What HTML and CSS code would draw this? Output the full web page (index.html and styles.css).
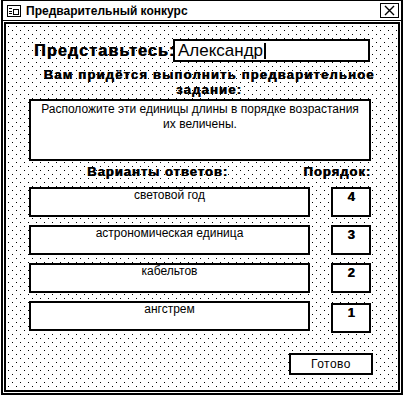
FILE: index.html
```html
<!DOCTYPE html>
<html lang="ru">
<head>
    <meta charset="UTF-8">
    <title>Предварительный конкурс</title>
    <link rel="stylesheet" href="styles.css">
</head>
<body>
    <div class="window">
        <div class="titlebar">
            <svg class="sys-icon" width="14" height="12" viewBox="0 0 14 12">
                <rect x="0.5" y="0.5" width="13" height="11" fill="none" stroke="#000"/>
                <path d="M2 3.5h3M2 6.5h3M2 8.5h3" stroke="#000"/>
                <rect x="6.5" y="4.5" width="5" height="5" fill="none" stroke="#000"/>
            </svg>
            <span class="title">Предварительный конкурс</span>
            <div class="close-box">
                <svg width="11" height="11" viewBox="0 0 11 11">
                    <path d="M1 1L10 10M10 1L1 10" stroke="#000" stroke-width="1.4"/>
                </svg>
            </div>
        </div>

        <div class="client">
            <div class="name-row">
                <span class="name-label">Представьтесь:</span>
                <div class="name-field">Александр<span class="caret"></span></div>
            </div>

            <div class="task-title">Вам придётся выполнить предварительное задание:</div>

            <div class="task-box">Расположите эти единицы длины в порядке возрастания их величены.</div>

            <div class="answers-head">
                <span>Варианты ответов:</span>
                <span>Порядок:</span>
            </div>

            <!-- варианты и порядок -->
            <div class="answers">
                <div class="answer">световой год</div>
                <div class="order">4</div>
                <div class="answer">астрономическая единица</div>
                <div class="order">3</div>
                <div class="answer">кабельтов</div>
                <div class="order">2</div>
                <div class="answer">ангстрем</div>
                <div class="order order-last">1</div>
            </div>

            <div class="actions">
                <button class="btn">Готово</button>
            </div>
        </div>
    </div>
</body>
</html>
```

FILE: styles.css
```css
body {
    margin: 0;
    background: #fff;
    font-family: "Liberation Sans", Arial, sans-serif;
    color: #000;
}

.window {
    margin-left: 1px;
    width: 402px;
    height: 395px;
    box-sizing: border-box;
    border: 2px solid #000;
    border-top-width: 1px;
    padding: 0 1px 1px;
    display: flex;
    flex-direction: column;
    background: #fff;
}

/* заголовок окна */
.titlebar {
    margin: 0 -1px;
    height: 20px;
    box-sizing: border-box;
    border-bottom: 1px solid #000;
    display: flex;
    align-items: center;
    padding-left: 4px;
}

.sys-icon {
    display: block;
    margin-right: 5px;
}

.title {
    font-size: 12px;
    font-weight: bold;
    flex: 1;
}

.close-box {
    width: 19px;
    height: 15px;
    box-sizing: border-box;
    border: 1px solid #000;
    margin-right: 2px;
    display: flex;
    align-items: center;
    justify-content: center;
}

.close-box svg {
    display: block;
}

/* рабочая область с точечной сеткой */
.client {
    flex: 1;
    margin-top: 1px;
    border: 2px solid #000;
    background-color: #fff;
    background-image:
        conic-gradient(from 270deg at 1px 1px, #000 25%, transparent 0),
        conic-gradient(from 270deg at 1px 1px, #000 25%, transparent 0);
    background-size: 8px 8px;
    background-position: 2px 2px, 6px 6px;
}

.name-row {
    display: flex;
    align-items: center;
    margin-top: 15px;
    padding-left: 28px;
}

.name-label {
    width: 139px;
    font-size: 16px;
    font-weight: bold;
    letter-spacing: 1.2px;
    text-shadow: 0.6px 0 0 #000;
}

.name-field {
    width: 197px;
    height: 23px;
    box-sizing: border-box;
    border: 2px solid #000;
    background: #fff;
    font-size: 17px;
    line-height: 19px;
    padding-left: 3px;
    display: flex;
    align-items: center;
}

.caret {
    display: inline-block;
    width: 2px;
    height: 16px;
    background: #000;
    margin-left: 1px;
}

.task-title {
    margin: 5px 0 0 33px;
    width: 340px;
    text-align: center;
    font-size: 13px;
    font-weight: bold;
    letter-spacing: 1.2px;
    line-height: 15px;
    text-shadow: 0.6px 0 0 #000;
}

.task-box {
    margin: 2px 0 0 23px;
    width: 342px;
    height: 62px;
    box-sizing: border-box;
    border: 2px solid #000;
    background: #fff;
    padding: 1px 4px;
    font-size: 12px;
    line-height: 15px;
    text-align: center;
}

.answers-head {
    margin: 3px 0 0 23px;
    width: 342px;
    box-sizing: border-box;
    padding-left: 58px;
    display: flex;
    justify-content: space-between;
    font-size: 13px;
    font-weight: bold;
    letter-spacing: 1px;
    line-height: 15px;
    text-shadow: 0.6px 0 0 #000;
}

.answers {
    margin: 8px 0 0 23px;
    display: grid;
    grid-template-columns: 281px 40px;
    grid-auto-rows: 30px;
    column-gap: 21px;
    row-gap: 8px;
}

.answer,
.order {
    box-sizing: border-box;
    border: 2px solid #000;
    background: #fff;
    text-align: center;
}

.answer {
    font-size: 12px;
    line-height: 13px;
}

.order {
    font-size: 13px;
    font-weight: bold;
    line-height: 15px;
    text-shadow: 0.6px 0 0 #000;
}

.order-last {
    height: 30px;
    margin-top: 2px;
}

.actions {
    display: flex;
    justify-content: flex-end;
    padding-right: 25px;
    margin-top: 22px;
}

.btn {
    width: 84px;
    height: 22px;
    box-sizing: border-box;
    border: 2px solid #000;
    background: #fff;
    font-family: "Liberation Sans", Arial, sans-serif;
    font-size: 12px;
    letter-spacing: 0.5px;
    padding: 0;
    color: #000;
}
```
